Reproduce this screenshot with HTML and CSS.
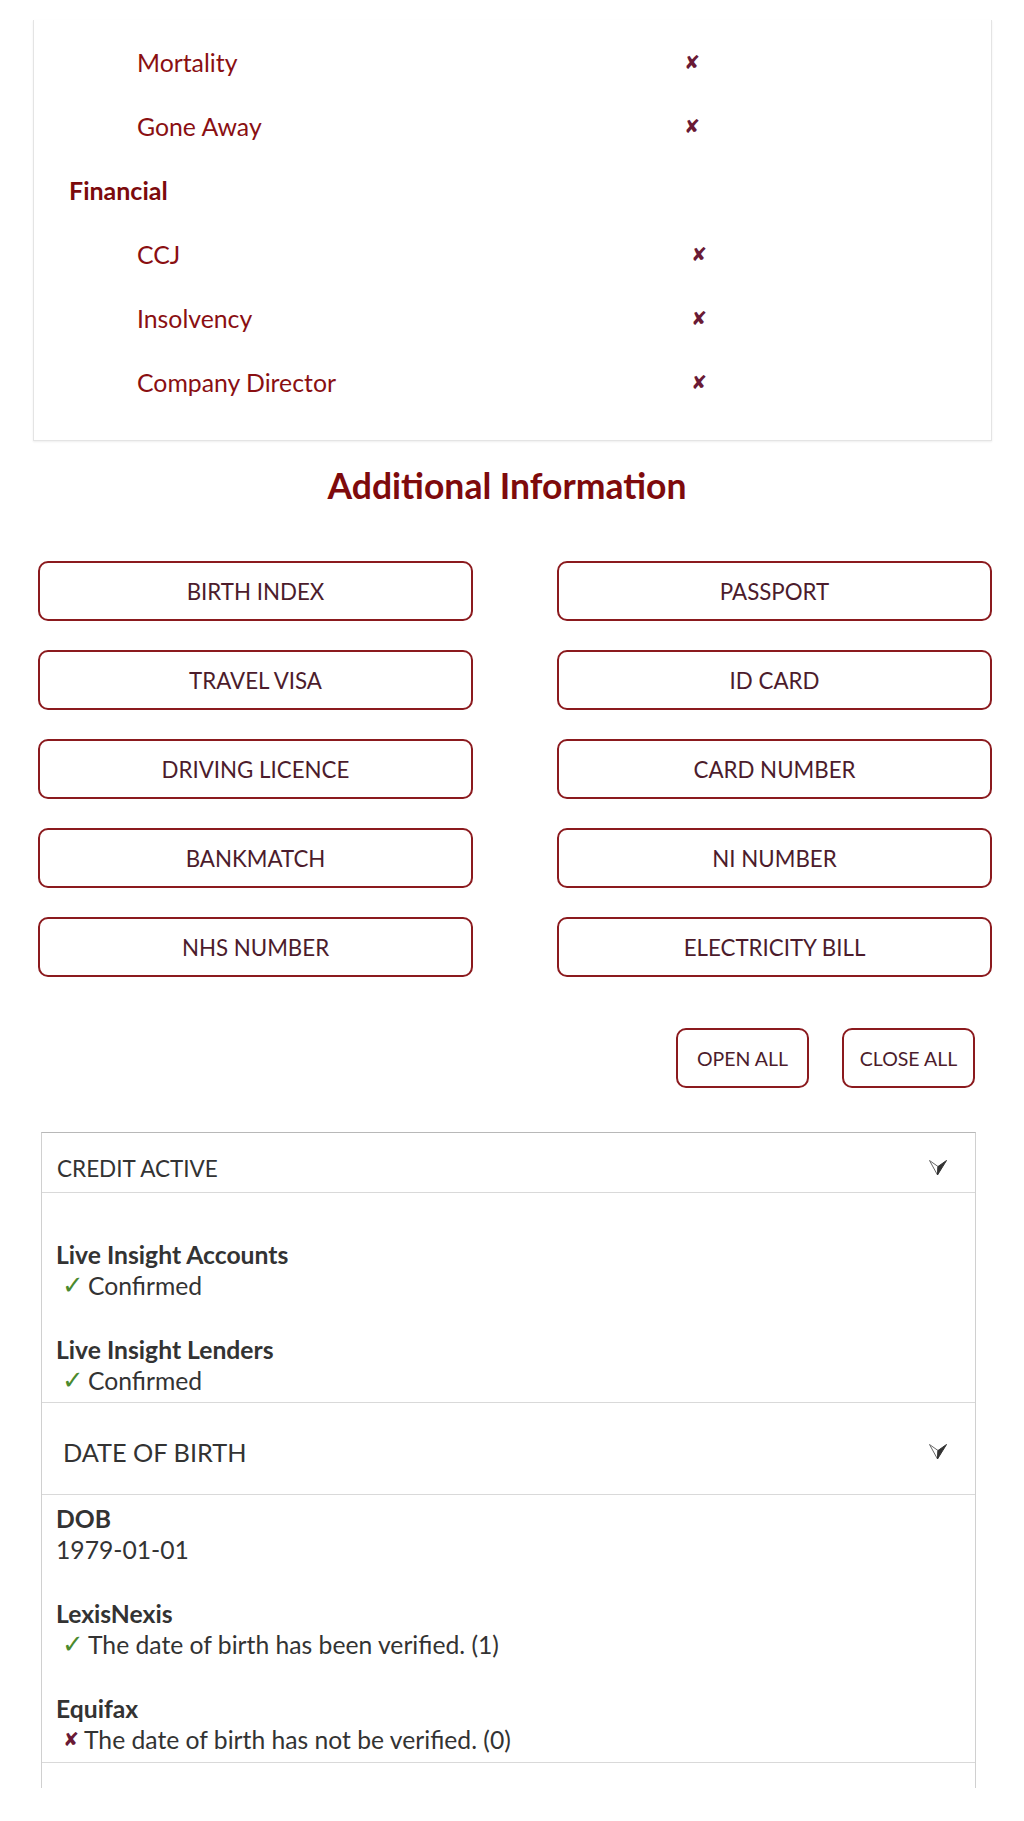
FILE: index.html
```html
<!DOCTYPE html>
<html lang="en">
<head>
<meta charset="utf-8">
<title>Additional Information</title>
<link rel="stylesheet" href="styles.css">
</head>
<body>
<div class="card">
  <div class="row sub"><span class="row-label">Mortality</span><span class="cross">✘</span></div>
  <div class="row sub"><span class="row-label">Gone Away</span><span class="cross">✘</span></div>
  <div class="row group-title"><span class="group-label">Financial</span></div>
  <div class="row sub fin"><span class="row-label">CCJ</span><span class="cross">✘</span></div>
  <div class="row sub fin"><span class="row-label">Insolvency</span><span class="cross">✘</span></div>
  <div class="row sub fin"><span class="row-label">Company Director</span><span class="cross">✘</span></div>
</div>

<h2 class="section-title">Additional Information</h2>

<div class="btn-grid">
  <button class="doc-btn">BIRTH INDEX</button>
  <button class="doc-btn">PASSPORT</button>
  <button class="doc-btn">TRAVEL VISA</button>
  <button class="doc-btn">ID CARD</button>
  <button class="doc-btn">DRIVING LICENCE</button>
  <button class="doc-btn">CARD NUMBER</button>
  <button class="doc-btn">BANKMATCH</button>
  <button class="doc-btn">NI NUMBER</button>
  <button class="doc-btn">NHS NUMBER</button>
  <button class="doc-btn">ELECTRICITY BILL</button>
</div>

<div class="toggle-row">
  <button class="toggle-btn open-btn">OPEN ALL</button>
  <button class="toggle-btn">CLOSE ALL</button>
</div>

<div class="accordion">
  <div class="acc-head small">
    <span>CREDIT ACTIVE</span>
    <svg class="chev" width="20" height="18" viewBox="0 0 20 18" aria-hidden="true">
      <polygon points="1.5,1.5 10,7.5 9.5,16" fill="#fff" stroke="#666" stroke-width="1"/>
      <polygon points="18.5,1.5 10,7.5 9.5,16" fill="#333" stroke="#333" stroke-width="1" stroke-linejoin="round"/>
    </svg>
  </div>
  <div class="acc-body credit">
    <div class="item">
      <div class="item-label">Live Insight Accounts</div>
      <div class="item-value"><span class="tick">✓</span>Confirmed</div>
    </div>
    <div class="item">
      <div class="item-label">Live Insight Lenders</div>
      <div class="item-value"><span class="tick">✓</span>Confirmed</div>
    </div>
  </div>
  <div class="acc-head large">
    <span>DATE OF BIRTH</span>
    <svg class="chev" width="20" height="18" viewBox="0 0 20 18" aria-hidden="true">
      <polygon points="1.5,1.5 10,7.5 9.5,16" fill="#fff" stroke="#666" stroke-width="1"/>
      <polygon points="18.5,1.5 10,7.5 9.5,16" fill="#333" stroke="#333" stroke-width="1" stroke-linejoin="round"/>
    </svg>
  </div>
  <div class="acc-body dob">
    <div class="item">
      <div class="item-label">DOB</div>
      <div class="item-value">1979-01-01</div>
    </div>
    <div class="item">
      <div class="item-label">LexisNexis</div>
      <div class="item-value"><span class="tick">✓</span>The date of birth has been verified. (1)</div>
    </div>
    <div class="item">
      <div class="item-label">Equifax</div>
      <div class="item-value"><span class="miss">✘</span>The date of birth has not be verified. (0)</div>
    </div>
  </div>
  <div class="acc-tail"></div>
</div>
</body>
</html>
```

FILE: styles.css
```css
html, body {
  margin: 0;
  padding: 0;
  background: #ffffff;
}

body {
  font-family: Lato, "Open Sans", sans-serif;
  color: #333333;
}

/* ---------- top card ---------- */
.card {
  box-sizing: border-box;
  width: 959px;
  margin: 20px 0 0 33px;
  padding: 10px 0 26px;
  border: 1px solid #e4e4e4;
  border-top: none;
  box-shadow: 0 1px 2px rgba(0, 0, 0, 0.07);
}

.row {
  display: grid;
  align-items: center;
  height: 64px;
}

.row.sub {
  grid-template-columns: 547px auto;
  padding-left: 103px;
}

.row.sub.fin {
  grid-template-columns: 554px auto;
}

.row.group-title {
  padding-left: 35px;
}

.row-label {
  font-size: 24.8px;
  color: #8a0f12;
}

.group-label {
  font-size: 25px;
  font-weight: 700;
  color: #7c0a0c;
}

.cross {
  font-family: "DejaVu Sans", sans-serif;
  font-size: 19px;
  color: #6a1a35;
}

/* ---------- heading ---------- */
.section-title {
  margin: 24px 10px 0 0;
  text-align: center;
  font-size: 35.5px;
  line-height: 42px;
  font-weight: 700;
  color: #7e0a0c;
}

/* ---------- document buttons ---------- */
.btn-grid {
  box-sizing: border-box;
  width: 954px;
  margin: 54px 0 0 38px;
  display: grid;
  grid-template-columns: 1fr 1fr;
  grid-auto-rows: 60px;
  column-gap: 84px;
  row-gap: 29px;
}

.doc-btn,
.toggle-btn {
  box-sizing: border-box;
  background: #ffffff;
  border: 2px solid #8b1a1e;
  border-radius: 10px;
  font-family: Lato, "Open Sans", sans-serif;
  color: #4c1c2c;
  cursor: pointer;
  padding: 0;
}

.doc-btn {
  font-size: 22.3px;
}

.toggle-row {
  display: flex;
  justify-content: flex-end;
  gap: 33px;
  width: 975px;
  margin-top: 51px;
}

.toggle-btn {
  height: 60px;
  width: 133px;
  font-size: 19.5px;
}

/* ---------- accordion ---------- */
.accordion {
  box-sizing: border-box;
  width: 935px;
  margin: 44px 0 0 41px;
  border-left: 1px solid #d0d0d0;
  border-right: 1px solid #d0d0d0;
  border-top: 1px solid #b8b8b8;
}

.acc-head {
  box-sizing: border-box;
  display: flex;
  align-items: center;
  justify-content: space-between;
  border-bottom: 1px solid #d9d9d9;
  color: #333333;
  padding-right: 27px;
}

.acc-head.small {
  height: 60px;
  padding-top: 11px;
  padding-left: 15px;
  font-size: 22.5px;
}

.acc-head.large {
  height: 92px;
  padding-top: 6px;
  padding-left: 21px;
  font-size: 25.3px;
}

.chev {
  display: block;
  margin-top: 0;
}

.acc-body {
  box-sizing: border-box;
  border-bottom: 1px solid #d9d9d9;
  padding-left: 14px;
  display: flex;
  flex-direction: column;
}

.acc-body.credit {
  padding-top: 46px;
  padding-bottom: 6px;
  gap: 33px;
}

.acc-body.dob {
  padding-top: 8px;
  padding-bottom: 7px;
  gap: 33px;
}

.item-label {
  font-size: 24.7px;
  line-height: 31px;
  font-weight: 700;
  color: #333333;
}

.item-value {
  font-size: 24.7px;
  line-height: 31px;
  color: #333333;
}

.tick {
  display: inline-block;
  width: 20px;
  margin: 0 6px 0 6px;
  font-family: "DejaVu Sans", sans-serif;
  font-size: 26px;
  line-height: 31px;
  vertical-align: top;
  color: #4a8a2e;
}

.miss {
  display: inline-block;
  width: 15px;
  margin: 0 6px 0 7px;
  font-family: "DejaVu Sans", sans-serif;
  font-size: 19px;
  line-height: 31px;
  vertical-align: top;
  color: #6a1a35;
}

.acc-tail {
  height: 25px;
}
```
